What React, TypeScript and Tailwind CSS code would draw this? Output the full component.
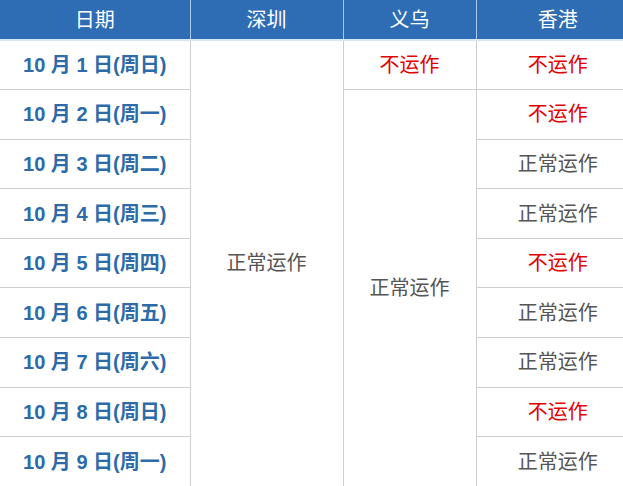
import React from "react";

const rows: { date: string; hk: boolean }[] = [
  { date: "10 月 1 日(周日)", hk: false },
  { date: "10 月 2 日(周一)", hk: false },
  { date: "10 月 3 日(周二)", hk: true },
  { date: "10 月 4 日(周三)", hk: true },
  { date: "10 月 5 日(周四)", hk: false },
  { date: "10 月 6 日(周五)", hk: true },
  { date: "10 月 7 日(周六)", hk: true },
  { date: "10 月 8 日(周日)", hk: false },
  { date: "10 月 9 日(周一)", hk: true },
];

const cjk = { fontFamily: '"Liberation Sans", "Noto Sans CJK SC", sans-serif' };

export default function App() {
  return (
    <div className="w-[623px] h-[486px] overflow-hidden bg-white" style={cjk}>
      <table className="w-[639px] max-w-none table-fixed border-collapse text-[20px]">
        <colgroup>
          <col className="w-[190px]" />
          <col className="w-[153px]" />
          <col className="w-[133px]" />
          <col className="w-[163px]" />
        </colgroup>
        <thead>
          <tr className="h-[40px] bg-[#2e6db3] text-white">
            <th className="font-normal border-b-2 border-b-[#d6e6f5] border-r border-r-[#a9c9ec]">日期</th>
            <th className="font-normal border-b-2 border-b-[#d6e6f5] border-r border-r-[#a9c9ec]">深圳</th>
            <th className="font-normal border-b-2 border-b-[#d6e6f5] border-r border-r-[#a9c9ec]">义乌</th>
            <th className="font-normal border-b-2 border-b-[#d6e6f5]">香港</th>
          </tr>
        </thead>
        <tbody>
          {rows.map((r, i) => (
            <tr key={i} className="h-[49.6px]">
              <td className="text-center font-bold text-[#2c6aa8] border border-[#cfcfcf] border-l-0">
                {r.date}
              </td>
              {i === 0 && (
                <td rowSpan={9} className="text-center text-[#555] border border-[#cfcfcf]">
                  正常运作
                </td>
              )}
              {i === 0 && (
                <td className="text-center text-[#e00000] border border-[#cfcfcf]">不运作</td>
              )}
              {i === 1 && (
                <td rowSpan={8} className="text-center text-[#555] border border-[#cfcfcf]">
                  正常运作
                </td>
              )}
              <td
                className={
                  "text-center border border-[#cfcfcf] border-r-0 " +
                  (r.hk ? "text-[#555]" : "text-[#e00000]")
                }
              >
                {r.hk ? "正常运作" : "不运作"}
              </td>
            </tr>
          ))}
        </tbody>
      </table>
    </div>
  );
}
